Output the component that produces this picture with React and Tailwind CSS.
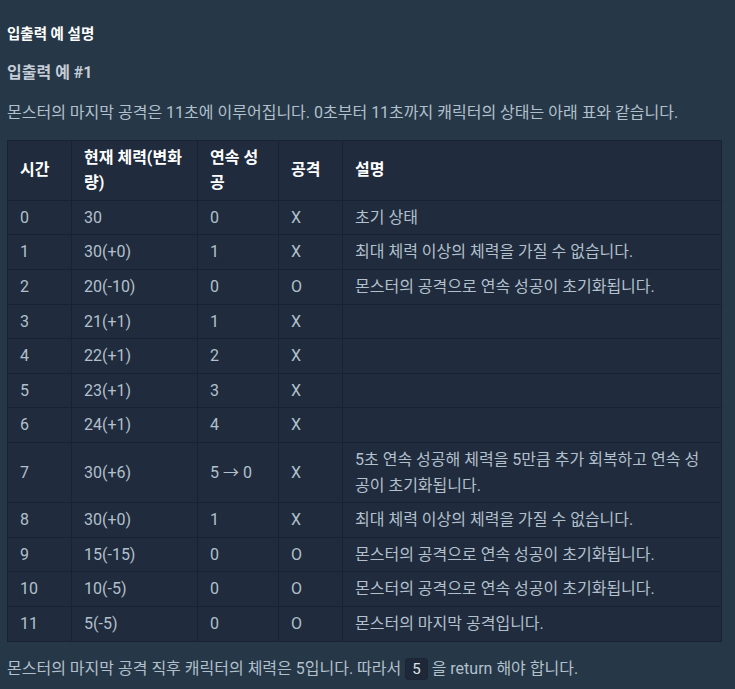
const rows = [
  ["0", "30", "0", "X", "초기 상태"],
  ["1", "30(+0)", "1", "X", "최대 체력 이상의 체력을 가질 수 없습니다."],
  ["2", "20(-10)", "0", "O", "몬스터의 공격으로 연속 성공이 초기화됩니다."],
  ["3", "21(+1)", "1", "X", ""],
  ["4", "22(+1)", "2", "X", ""],
  ["5", "23(+1)", "3", "X", ""],
  ["6", "24(+1)", "4", "X", ""],
  ["7", "30(+6)", "5 → 0", "X", "5초 연속 성공해 체력을 5만큼 추가 회복하고 연속 성공이 초기화됩니다."],
  ["8", "30(+0)", "1", "X", "최대 체력 이상의 체력을 가질 수 없습니다."],
  ["9", "15(-15)", "0", "O", "몬스터의 공격으로 연속 성공이 초기화됩니다."],
  ["10", "10(-5)", "0", "O", "몬스터의 공격으로 연속 성공이 초기화됩니다."],
  ["11", "5(-5)", "0", "O", "몬스터의 마지막 공격입니다."],
];

const headers = [
  { label: "시간", w: "w-[64px]" },
  { label: "현재 체력(변화량)", w: "w-[126px]" },
  { label: "연속 성공", w: "w-[81px]" },
  { label: "공격", w: "w-[64px]" },
  { label: "설명", w: "" },
];

export default function App() {
  return (
    <div className="min-h-[689px] bg-[#263747] pl-[7px] pt-[23px] pb-4 font-['Roboto','Noto_Sans_CJK_KR',sans-serif] text-[#b2c0cc]">
      <h5 className="text-[14.5px] font-bold leading-6 text-white">입출력 예 설명</h5>
      <h6 className="mt-[14px] text-[16px] font-bold leading-6 text-[#c4ccd6]">입출력 예 #1</h6>
      <p className="mt-[15px] text-[16px] leading-[25.6px]">
        몬스터의 마지막 공격은 11초에 이루어집니다. 0초부터 11초까지 캐릭터의 상태는 아래 표와 같습니다.
      </p>
      <table className="mt-[14px] w-[715px] table-fixed border-collapse border border-[#172334] bg-[#202b3d] text-[16px] leading-[25.6px]">
        <thead>
          <tr>
            {headers.map((h) => (
              <th
                key={h.label}
                className={`${h.w} border border-[#172334] px-3 py-1 text-left font-semibold text-white`}
              >
                {h.label}
              </th>
            ))}
          </tr>
        </thead>
        <tbody>
          {rows.map((r) => (
            <tr key={r[0]}>
              {r.map((c, i) => (
                <td key={i} className="border border-[#172334] px-3 py-1 align-middle">
                  {c}
                </td>
              ))}
            </tr>
          ))}
        </tbody>
      </table>
      <p className="mt-[14px] text-[16px] leading-[25.6px]">
        몬스터의 마지막 공격 직후 캐릭터의 체력은 5입니다. 따라서{" "}
        <code className="rounded border border-[#1b2535] bg-[#1e2838] px-[6px] py-[1px] font-['Roboto',sans-serif] text-[15px] text-[#dde3ea]">
          5
        </code>{" "}
        을 return 해야 합니다.
      </p>
    </div>
  );
}
